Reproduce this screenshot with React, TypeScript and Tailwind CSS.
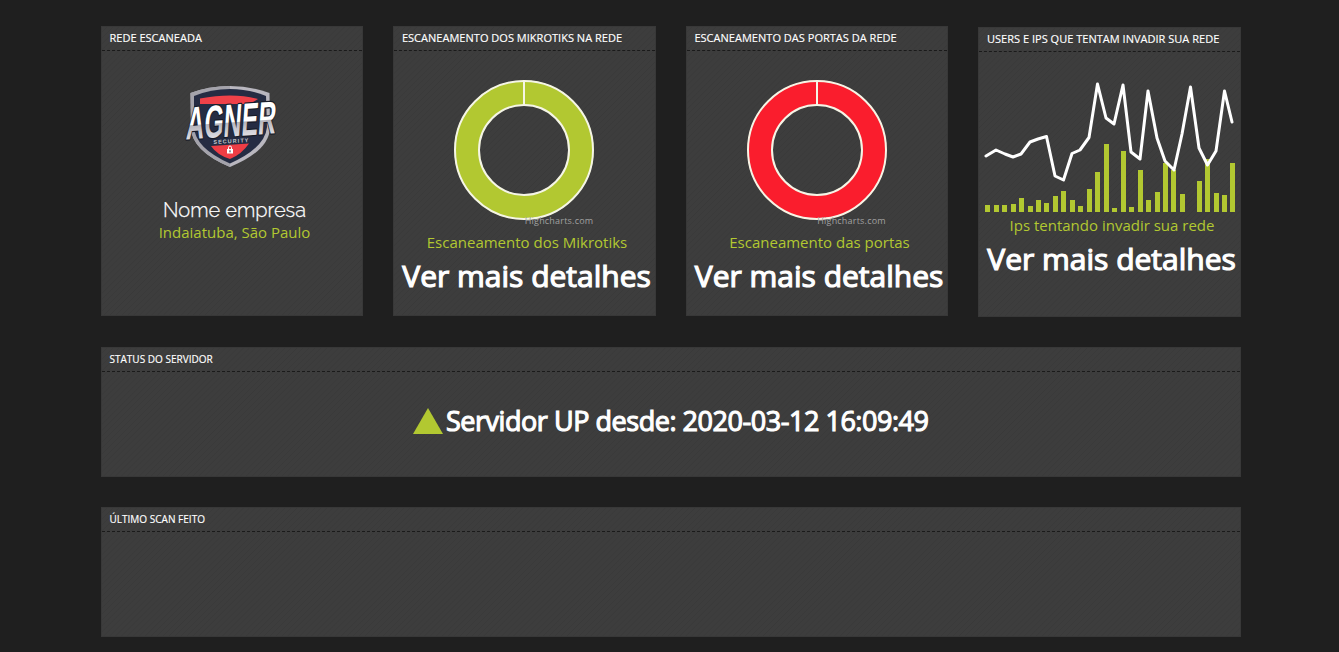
import type { ReactNode } from "react";

const LINE = "986,156 996,150 1005,154 1013,157 1021,154 1030,142 1038,139 1046.5,136.5 1055,176 1063.5,180 1072,153.5 1080,150 1089,137.5 1097.5,84 1106,118 1114,124 1123,85 1131,152 1140,159 1148,91 1157,138 1165,161 1174,170 1182,134 1190.5,87 1199,148 1207.5,165 1216,151 1224.5,91 1232,122";

const BARS: [number, number][] = [
  [985, 7], [994, 7], [1002, 7], [1011, 8], [1019, 14], [1028, 6], [1036, 12], [1044, 9], [1053, 16], [1061, 21],
  [1070, 12], [1078, 6], [1087, 23], [1095, 40], [1104, 68], [1112, 4], [1121, 61], [1129, 5], [1138, 42], [1146, 12],
  [1155, 20], [1163, 49], [1171, 42], [1180, 18], [1197, 31], [1205, 53], [1214, 19], [1222, 17], [1230, 49],
];

function Panel({ title, className, titleClass = "text-[11px]", children }: { title: string; className: string; titleClass?: string; children?: ReactNode }) {
  return (
    <section className={`border border-[#383838] bg-[#3d3d3d] bg-[repeating-linear-gradient(135deg,transparent_0px,transparent_2.8px,rgba(0,0,0,0.06)_3.5px,transparent_4.2px)] ${className}`}>
      <h2 className={`h-[24px] border-b border-dashed border-[#1a1a1a] pl-[7.7px] leading-[22px] tracking-[0.02px] whitespace-nowrap text-white uppercase [-webkit-text-stroke:0.15px_white] ${titleClass}`}>
        {title}
      </h2>
      {children}
    </section>
  );
}

function Caption({ children }: { children: ReactNode }) {
  return <p className="pl-[5px] text-center text-[15px] leading-[22px] text-[#b2c831]">{children}</p>;
}

function Donut({ color }: { color: string }) {
  return (
    <svg width="140" height="140" viewBox="0 0 140 140" className="mt-[29px] ml-[60px] block">
      <circle cx="70" cy="70" r="57" fill="none" stroke={color} strokeWidth="25" />
      <circle cx="70" cy="70" r="69" fill="none" stroke="#f5f5e6" strokeWidth="2" />
      <circle cx="70" cy="70" r="45" fill="none" stroke="#f5f5e6" strokeWidth="2" />
      <path d="M70 1v24" stroke="#f5f5e6" strokeWidth="2" />
    </svg>
  );
}

function More() {
  return (
    <p className="mt-[6px] pl-2 text-[30px] leading-[33px] whitespace-nowrap text-white [-webkit-text-stroke:1.2px_white]">
      Ver mais detalhes
    </p>
  );
}

function DonutPanel({ title, color, caption }: { title: string; color: string; caption: string }) {
  return (
    <Panel title={title} className="h-[290px]">
      <div className="relative mb-[11px]">
        <Donut color={color} />
        <span className="absolute top-[135px] left-[130.5px] text-[9px] leading-3 tracking-[0.2px] text-[#a0a0a0]">Highcharts.com</span>
      </div>
      <Caption>{caption}</Caption>
      <More />
    </Panel>
  );
}

function Logo() {
  return (
    <svg width="102" height="86" viewBox="180 83 102 86" className="mt-[32px] ml-[78px] block overflow-visible">
      <path d="M190.500 93Q209 86 230 86Q251 86 269.500 93L270 128Q269 151 230 167Q192 151 191 128Z" fill="#b9b7bf" />
      <path d="M190.500 93Q209 86 230 86V167Q192 151 191 128Z" fill="#a4a3ab" />
      <path d="M194 96Q211 89 230 89Q249 89 266 96L267 127Q265 148 230 163.500Q195 148 194 127Z" fill="#252c43" />
      <path d="M200 98.500Q216 95.500 230 95.500Q246 95.500 258 99L250 104H200Z" fill="#ef4149" />
      <path d="M211 146L249 143.500Q242 154 230 159Q217 155 211 146Z" fill="#ef3d45" />
      <defs>
        <linearGradient id="metal" x1="0" y1="0" x2="0" y2="1">
          <stop offset="0.53" stopColor="#ffffff" />
          <stop offset="0.55" stopColor="#b5b4bc" />
          <stop offset="0.8" stopColor="#dddce1" />
        </linearGradient>
      </defs>
      <g transform="translate(185.500 139.500) rotate(-4) skewX(-8)" stroke="#181b27" strokeWidth="2.500" strokeLinejoin="round" paintOrder="stroke">
        <text textLength="90" lengthAdjust="spacingAndGlyphs" fontSize="46" fontFamily="Liberation Sans Narrow, Liberation Sans, sans-serif" fontWeight="700" fill="url(#metal)">AGNER</text>
      </g>
      <text transform="translate(213.500 144) rotate(-3)" textLength="35" fontSize="5.500" fontFamily="Liberation Sans, sans-serif" fontWeight="700" fill="#c4c4cb">SECURITY</text>
      <path d="M228.500 149.500v-2a1.500 1.500 0 0 1 3 0v2" fill="none" stroke="#fff" />
      <rect x="227" y="149" width="6" height="4.500" fill="#fff" />
      <rect x="229.500" y="150.300" width="1" height="2" fill="#252c43" />
    </svg>
  );
}

export default function App() {
  return (
    <main className="h-[652px] overflow-hidden bg-[#1f1f1f] pt-[26px] pl-[100.75px] font-['Open_Sans',sans-serif]">
      <div className="w-[1140px]">
        <div className="grid grid-cols-4 items-start gap-[30px]">
          <Panel title="Rede escaneada" className="h-[290px]">
            <Logo />
            <h1 className="mt-[28px] mb-[-2px] pl-[5px] text-center font-['Raleway','Lato',sans-serif] text-[20px] leading-[26px] font-light text-white [-webkit-text-stroke:0.25px_white]">Nome empresa</h1>
            <Caption>Indaiatuba, São Paulo</Caption>
          </Panel>
          <DonutPanel title="Escaneamento dos Mikrotiks na rede" color="#b2c831" caption="Escaneamento dos Mikrotiks" />
          <DonutPanel title="Escaneamento das portas da rede" color="#fa1d2d" caption="Escaneamento das portas" />
          <Panel title="Users e IPs que tentam invadir sua rede" className="mt-px h-[290px]">
            <svg width="260" height="142" viewBox="979 72 260 142" className="mt-[20px] block">
              {BARS.map(([x, h]) => (
                <rect key={x} x={x} y={212 - h} width="5" height={h} fill="#b2c831" />
              ))}
              <polyline points={LINE} fill="none" stroke="#fff" strokeWidth="3" strokeLinejoin="round" strokeLinecap="round" />
            </svg>
            <Caption>Ips tentando invadir sua rede</Caption>
            <More />
          </Panel>
        </div>
        <Panel title="Status do servidor" titleClass="text-[10px]" className="mt-[30px] h-[130px]">
          <div className="mt-[32px] flex items-center justify-center gap-[3px]">
            <svg width="30" height="26" viewBox="0 0 30 26"><path d="M15 0L30 26H0Z" fill="#b2c831" /></svg>
            <p className="text-[27px] leading-[34px] tracking-[-0.46px] whitespace-nowrap text-white [-webkit-text-stroke:1.1px_white]">Servidor UP desde: 2020-03-12 16:09:49</p>
          </div>
        </Panel>
        <Panel title="Último scan feito" titleClass="text-[10px]" className="mt-[30px] h-[130px]" />
      </div>
    </main>
  );
}
